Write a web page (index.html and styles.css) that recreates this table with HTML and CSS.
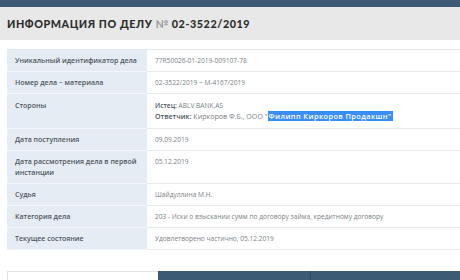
FILE: index.html
```html
<!DOCTYPE html>
<html lang="ru">
<head>
<meta charset="utf-8">
<link rel="stylesheet" href="styles.css">
</head>
<body>
<div class="topbar"></div>
<div class="titlebar">
  <h1 class="title">ИНФОРМАЦИЯ ПО ДЕЛУ <span class="num">№</span> 02-3522/2019</h1>
</div>
<div class="content">
  <table class="info">
    <tr><td class="lbl">Уникальный идентификатор дела</td><td class="val">77R50026-01-2019-009107-78</td></tr>
    <tr><td class="lbl">Номер дела ~ материала</td><td class="val">02-3522/2019 ~ М-4167/2019</td></tr>
    <tr class="tall"><td class="lbl">Стороны</td><td class="val"><b>Истец:</b> ABLV BANK,AS<br><span class="defendant"><b>Ответчик:</b> Киркоров Ф.Б., ООО "<span class="sel">Филипп Киркоров Продакшн"</span></span></td></tr>
    <tr><td class="lbl">Дата поступления</td><td class="val">09.09.2019</td></tr>
    <tr><td class="lbl">Дата рассмотрения дела в первой инстанции</td><td class="val">05.12.2019</td></tr>
    <tr><td class="lbl">Судья</td><td class="val">Шайдуллина М.Н.</td></tr>
    <tr><td class="lbl">Категория дела</td><td class="val">203 - Иски о взыскании сумм по договору займа, кредитному договору</td></tr>
    <tr><td class="lbl">Текущее состояние</td><td class="val">Удовлетворено частично, 05.12.2019</td></tr>
  </table>
  <div class="tabs">
    <div class="tab active"></div>
    <div class="tab dark"></div>
    <div class="tab dark last"></div>
  </div>
</div>
</body>
</html>
```
FILE: styles.css
```css
html, body {
  margin: 0;
  padding: 0;
  background: #ffffff;
  overflow: hidden;
}
body {
  font-family: "Open Sans", "Noto Sans", sans-serif;
  width: 460px;
  height: 280px;
}
.topbar {
  height: 7px;
  background: #3d5b77;
}
.titlebar {
  height: 33px;
  background: #e8e8e8;
  display: flex;
  align-items: center;
  padding-left: 7px;
}
.title {
  margin: 0;
  font-family: Lato, "Open Sans", sans-serif;
  font-weight: 900;
  font-size: 10.8px;
  letter-spacing: 0.55px;
  color: #2e2e2e;
  line-height: 1;
  padding-top: 1px;
}
.num {
  color: #9a9a9a;
  font-weight: 700;
}
.content {
  padding: 9px 0 0 7px;
}
.info {
  border-collapse: collapse;
  width: 470px;
  font-size: 6.6px;
  line-height: 11px;
  border-top: 1px solid #e3e8ee;
}
.info td {
  padding: 5px 8px 5px 8px;
  vertical-align: top;
  border-bottom: 1px solid #e6eaee;
}
.info .lbl {
  width: 124px;
  background: #e6ecf3;
  color: #4e5660;
  font-weight: 600;
  font-size: 7px;
  border-bottom-color: #f3f6f9;
}
.info .val {
  color: #7a7f85;
  font-weight: 400;
}
.info .val b {
  color: #4e5660;
  font-weight: 600;
}
.info .tall td {
  padding-top: 6px;
  padding-bottom: 6px;
}
.defendant {
  font-size: 7.1px;
}
.sel {
  background: #3a8ef6;
  color: #ffffff;
  font-weight: 600;
  font-size: 7.4px;
  letter-spacing: 0.4px;
  padding: 0 1px;
}
.tabs {
  display: flex;
  margin-top: 21px;
  height: 14px;
}
.tab {
  height: 14px;
}
.tab.active {
  width: 150px;
  background: #ffffff;
  border-top: 1px solid #e2e2e2;
  border-left: 1px solid #e2e2e2;
}
.tab.dark {
  width: 152px;
  background: #3c5a73;
  border-right: 1px solid #2f4a60;
}
.tab.last {
  flex: 1;
  border-right: none;
}
```
